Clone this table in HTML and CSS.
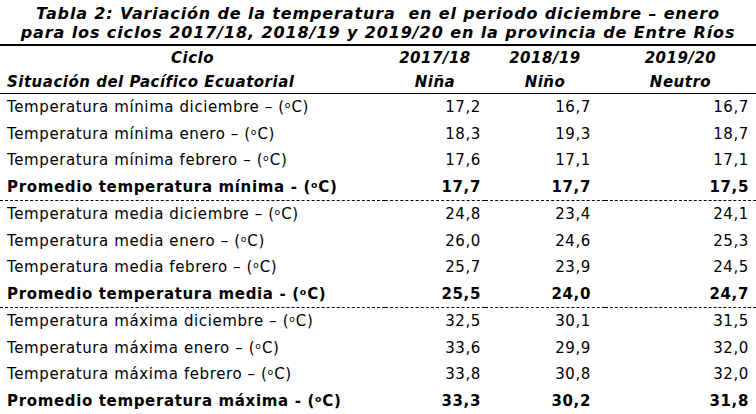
FILE: index.html
```html
<!DOCTYPE html>
<html lang="es">
<head>
<meta charset="utf-8">
<link rel="stylesheet" href="styles.css">
</head>
<body>
<div class="page">
  <div class="title">
    <div>Tabla 2: Variación de la temperatura&nbsp; en el periodo diciembre – enero</div>
    <div>para los ciclos 2017/18, 2018/19 y 2019/20 en la provincia de Entre Ríos</div>
  </div>
  <table class="tbl">
    <colgroup>
      <col class="c-label"><col class="c-1"><col class="c-2"><col class="c-3">
    </colgroup>
    <thead>
      <tr class="h1">
        <th class="center">Ciclo</th>
        <th>2017/18</th><th>2018/19</th><th>2019/20</th>
      </tr>
      <tr class="h2">
        <th class="left">Situación del Pacífico Ecuatorial</th>
        <th>Niña</th><th>Niño</th><th>Neutro</th>
      </tr>
    </thead>
    <tbody class="sect">
      <tr><td>Temperatura mínima diciembre – (<span class="deg">o</span>C)</td><td>17,2</td><td>16,7</td><td>16,7</td></tr>
      <tr><td>Temperatura mínima enero – (<span class="deg">o</span>C)</td><td>18,3</td><td>19,3</td><td>18,7</td></tr>
      <tr><td>Temperatura mínima febrero – (<span class="deg">o</span>C)</td><td>17,6</td><td>17,1</td><td>17,1</td></tr>
      <tr class="avg"><td>Promedio temperatura mínima - (<span class="deg">o</span>C)</td><td>17,7</td><td>17,7</td><td>17,5</td></tr>
    </tbody>
    <tbody class="sect">
      <tr><td>Temperatura media diciembre – (<span class="deg">o</span>C)</td><td>24,8</td><td>23,4</td><td>24,1</td></tr>
      <tr><td>Temperatura media enero – (<span class="deg">o</span>C)</td><td>26,0</td><td>24,6</td><td>25,3</td></tr>
      <tr><td>Temperatura media febrero – (<span class="deg">o</span>C)</td><td>25,7</td><td>23,9</td><td>24,5</td></tr>
      <tr class="avg"><td>Promedio temperatura media - (<span class="deg">o</span>C)</td><td>25,5</td><td>24,0</td><td>24,7</td></tr>
    </tbody>
    <tbody class="sect last">
      <tr><td>Temperatura máxima diciembre – (<span class="deg">o</span>C)</td><td>32,5</td><td>30,1</td><td>31,5</td></tr>
      <tr><td>Temperatura máxima enero – (<span class="deg">o</span>C)</td><td>33,6</td><td>29,9</td><td>32,0</td></tr>
      <tr><td>Temperatura máxima febrero – (<span class="deg">o</span>C)</td><td>33,8</td><td>30,8</td><td>32,0</td></tr>
      <tr class="avg"><td>Promedio temperatura máxima - (<span class="deg">o</span>C)</td><td>33,3</td><td>30,2</td><td>31,8</td></tr>
    </tbody>
  </table>
</div>
</body>
</html>
```
FILE: styles.css
```css
html, body {
  margin: 0;
  padding: 0;
  background: #fff;
}
.page {
  width: 756px;
  color: #000;
  font-family: "DejaVu Sans", Verdana, sans-serif;
}
.title {
  height: 44px;
  box-sizing: border-box;
  padding-top: 4px;
  text-align: center;
  font-weight: bold;
  font-style: italic;
  font-size: 16px;
  line-height: 19px;
  letter-spacing: 0.9px;
  white-space: nowrap;
}
.title div:first-child { letter-spacing: 0.85px; }
.tbl {
  width: 756px;
  border-collapse: collapse;
  table-layout: fixed;
  border-top: 2px solid #000;
  border-bottom: 2px solid #000;
}
.c-label { width: 385px; }
.c-1 { width: 100px; }
.c-2 { width: 120px; }
.c-3 { width: 151px; }
.tbl th {
  font-weight: bold;
  font-style: italic;
  font-size: 15px;
  letter-spacing: 0.5px;
  height: 24px;
  padding: 0;
  text-align: center;
  white-space: nowrap;
}
.tbl th.left { text-align: left; padding-left: 7px; }
.h2 th { border-bottom: 1px solid #000; height: 23px; }
.tbl td {
  font-size: 15px;
  letter-spacing: 0.6px;
  height: 26.5px;
  padding: 0;
  white-space: nowrap;
  text-align: right;
}
.tbl td:first-child { text-align: left; padding-left: 7px; }
.tbl td:nth-child(2) { padding-right: 4px; }
.tbl td:nth-child(3) { padding-right: 14px; }
.tbl td:nth-child(4) { padding-right: 7px; }
.avg td { font-weight: bold; letter-spacing: 0.65px; border-bottom: 1px dashed #000; }
.last .avg td { border-bottom: none; }
.deg {
  font-size: 0.62em;
  vertical-align: 0.45em;
  letter-spacing: 0;
  margin-right: 1px;
}
```
